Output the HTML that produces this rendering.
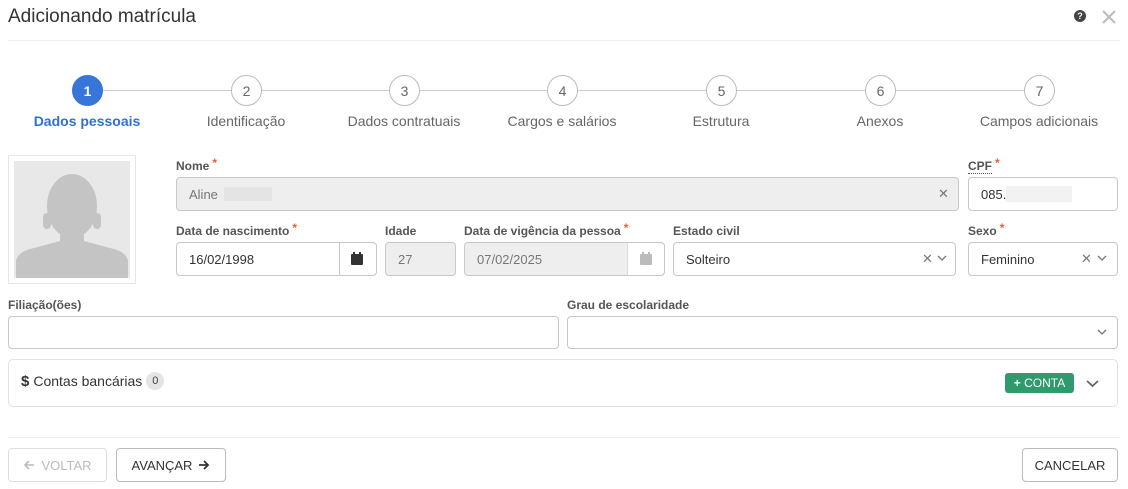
<!DOCTYPE html><html><head><meta charset="utf-8"><style>
*{box-sizing:border-box;margin:0;padding:0}
body{width:1128px;height:489px;background:#fff;font-family:"Liberation Sans",sans-serif;color:#333;position:relative;overflow:hidden}
.a{position:absolute}
.lbl{position:absolute;font-size:12px;color:#555;font-weight:bold}
.lbl i{color:#e0623a;font-style:normal;margin-left:3px;position:relative;top:-3px}
.inp{position:absolute;border:1px solid #c8c8c8;border-radius:4px;background:#fff;font-size:13px;color:#333;padding-left:12px;display:flex;align-items:center}
.dis{background:#eee;color:#777}
.circ{position:absolute;width:31px;height:31px;border-radius:50%;border:1px solid #bbb;background:#fff;top:75px;font-size:14px;color:#666;display:flex;align-items:center;justify-content:center}
.sl{position:absolute;top:113px;font-size:14px;color:#666;width:160px;text-align:center}
.btn{position:absolute;border:1px solid #bbb;border-radius:4px;top:448px;height:34px;font-size:13px;display:flex;align-items:center;justify-content:center;color:#333}
.x{position:absolute;font-size:13px;color:#777}
</style></head><body>
<div class="a" style="left:8px;top:6px;font-size:19px;color:#333">Adicionando matrícula</div>
<div class="a" style="left:1074px;top:10px;width:12px;height:12px;border-radius:50%;background:#444;color:#fff;font-size:9px;font-weight:bold;text-align:center;line-height:12px">?</div>
<svg class="a" style="left:1102px;top:10px" width="14" height="14"><path d="M1 1L13 13M13 1L1 13" stroke="#bbb" stroke-width="2"/></svg>
<div class="a" style="left:8px;right:8px;top:40px;border-top:1px solid #eee"></div>

<div class="a" style="left:87px;width:952px;top:90px;border-top:1px solid #ccc"></div>
<div class="circ" style="left:72px;background:#3775d9;border-color:#3775d9;color:#fff;font-weight:bold">1</div>
<div class="circ" style="left:231px">2</div><div class="circ" style="left:389px">3</div><div class="circ" style="left:547px">4</div><div class="circ" style="left:706px">5</div><div class="circ" style="left:865px">6</div><div class="circ" style="left:1024px">7</div>
<div class="sl" style="left:7px;color:#3070d0;font-weight:bold">Dados pessoais</div>
<div class="sl" style="left:166px">Identificação</div>
<div class="sl" style="left:324px">Dados contratuais</div>
<div class="sl" style="left:482px">Cargos e salários</div>
<div class="sl" style="left:641px">Estrutura</div>
<div class="sl" style="left:800px">Anexos</div>
<div class="sl" style="left:959px">Campos adicionais</div>

<div class="a" style="left:8px;top:155px;width:128px;height:129px;border:1px solid #e6e6e6;padding:5px"><div style="background:#e8e8e8;width:116px;height:117px;position:relative;overflow:hidden">
<svg width="116" height="117"><ellipse cx="58" cy="45" rx="25" ry="32" fill="#c4c4c4"/><rect x="29" y="52" width="8" height="16" rx="4" fill="#c4c4c4"/><rect x="79" y="52" width="8" height="16" rx="4" fill="#c4c4c4"/><rect x="46" y="70" width="24" height="16" fill="#c4c4c4"/><path d="M2 117L2 100Q4 90 20 87L46 80L70 80L96 87Q112 90 114 100L114 117Z" fill="#c4c4c4"/></svg></div></div>

<div class="lbl" style="left:176px;top:159px">Nome<i>*</i></div>
<div class="inp dis" style="left:176px;top:177px;width:783px;height:34px">Aline <span style="display:inline-block;width:48px;height:14px;background:#e4e4e4;margin-left:6px"></span></div>
<div class="x" style="left:938px;top:186px">✕</div>
<div class="lbl" style="left:968px;top:159px"><span style="border-bottom:1px dotted #555">CPF</span><i>*</i></div>
<div class="inp" style="left:968px;top:177px;width:150px;height:34px">085.<span style="display:inline-block;width:66px;height:16px;background:#f2f2f2"></span></div>

<div class="lbl" style="left:176px;top:224px">Data de nascimento<i>*</i></div>
<div class="inp" style="left:176px;top:242px;width:201px;height:34px">16/02/1998</div>
<div class="a" style="left:339px;top:243px;height:32px;border-left:1px solid #c8c8c8"></div>
<svg class="a" style="left:351px;top:252px" width="12" height="13"><rect x="0" y="2" width="12" height="11" rx="1" fill="#333"/><rect x="2" y="0" width="2" height="3" fill="#333"/><rect x="8" y="0" width="2" height="3" fill="#333"/></svg>
<div class="lbl" style="left:385px;top:224px">Idade</div>
<div class="inp dis" style="left:385px;top:242px;width:71px;height:34px">27</div>
<div class="lbl" style="left:464px;top:224px">Data de vigência da pessoa<i>*</i></div>
<div class="inp dis" style="left:464px;top:242px;width:201px;height:34px">07/02/2025</div>
<div class="a" style="left:627px;top:243px;width:37px;height:32px;background:#fff;border-left:1px solid #ddd;border-radius:0 4px 4px 0"></div>
<svg class="a" style="left:640px;top:252px" width="12" height="13"><rect x="0" y="2" width="12" height="11" rx="1" fill="#bbb"/><rect x="2" y="0" width="2" height="3" fill="#bbb"/><rect x="8" y="0" width="2" height="3" fill="#bbb"/></svg>
<div class="lbl" style="left:673px;top:224px">Estado civil</div>
<div class="inp" style="left:673px;top:242px;width:283px;height:34px">Solteiro</div>
<div class="x" style="left:922px;top:251px">✕</div>
<svg class="a" style="left:937px;top:255px" width="10" height="7"><path d="M1 1L5 5L9 1" stroke="#777" fill="none" stroke-width="1.3"/></svg>
<div class="lbl" style="left:968px;top:224px">Sexo<i>*</i></div>
<div class="inp" style="left:968px;top:242px;width:150px;height:34px">Feminino</div>
<div class="x" style="left:1081px;top:251px">✕</div>
<svg class="a" style="left:1097px;top:255px" width="10" height="7"><path d="M1 1L5 5L9 1" stroke="#777" fill="none" stroke-width="1.3"/></svg>

<div class="lbl" style="left:8px;top:298px">Filiação(ões)</div>
<div class="inp" style="left:8px;top:316px;width:551px;height:33px"></div>
<div class="lbl" style="left:567px;top:298px">Grau de escolaridade</div>
<div class="inp" style="left:567px;top:316px;width:551px;height:33px"></div>
<svg class="a" style="left:1097px;top:329px" width="10" height="7"><path d="M1 1L5 5L9 1" stroke="#777" fill="none" stroke-width="1.3"/></svg>

<div class="a" style="left:8px;top:359px;width:1110px;height:48px;border:1px solid #e2e2e2;border-radius:5px"></div>
<div class="a" style="left:21px;top:372px;font-size:14px;color:#333;display:flex;align-items:center;gap:4px"><b style="font-size:15px">$</b> Contas bancárias <span style="display:inline-block;background:#e4e4e4;border-radius:9px;font-size:11px;width:18px;height:18px;line-height:18px;text-align:center;color:#444">0</span></div>
<div class="a" style="left:1005px;top:373px;width:69px;height:20px;background:#2f9a6c;border-radius:3px;color:#fff;font-size:12px;text-align:center;line-height:20px"><b>+</b> CONTA</div>
<svg class="a" style="left:1086px;top:380px" width="13" height="8"><path d="M1 1L6.5 6L12 1" stroke="#666" fill="none" stroke-width="1.8"/></svg>

<div class="a" style="left:8px;right:8px;top:437px;border-top:1px solid #eee"></div>
<div class="btn" style="left:8px;width:99px;border-color:#ddd;color:#bbb"><svg width="12" height="10" style="margin-right:6px"><path d="M11 5H2M6 1L2 5L6 9" stroke="#bbb" stroke-width="1.6" fill="none"/></svg>VOLTAR</div>
<div class="btn" style="left:116px;width:110px">AVANÇAR<svg width="12" height="10" style="margin-left:6px"><path d="M1 5H10M6 1L10 5L6 9" stroke="#333" stroke-width="1.8" fill="none"/></svg></div>
<div class="btn" style="left:1022px;width:96px">CANCELAR</div>
</body></html>
